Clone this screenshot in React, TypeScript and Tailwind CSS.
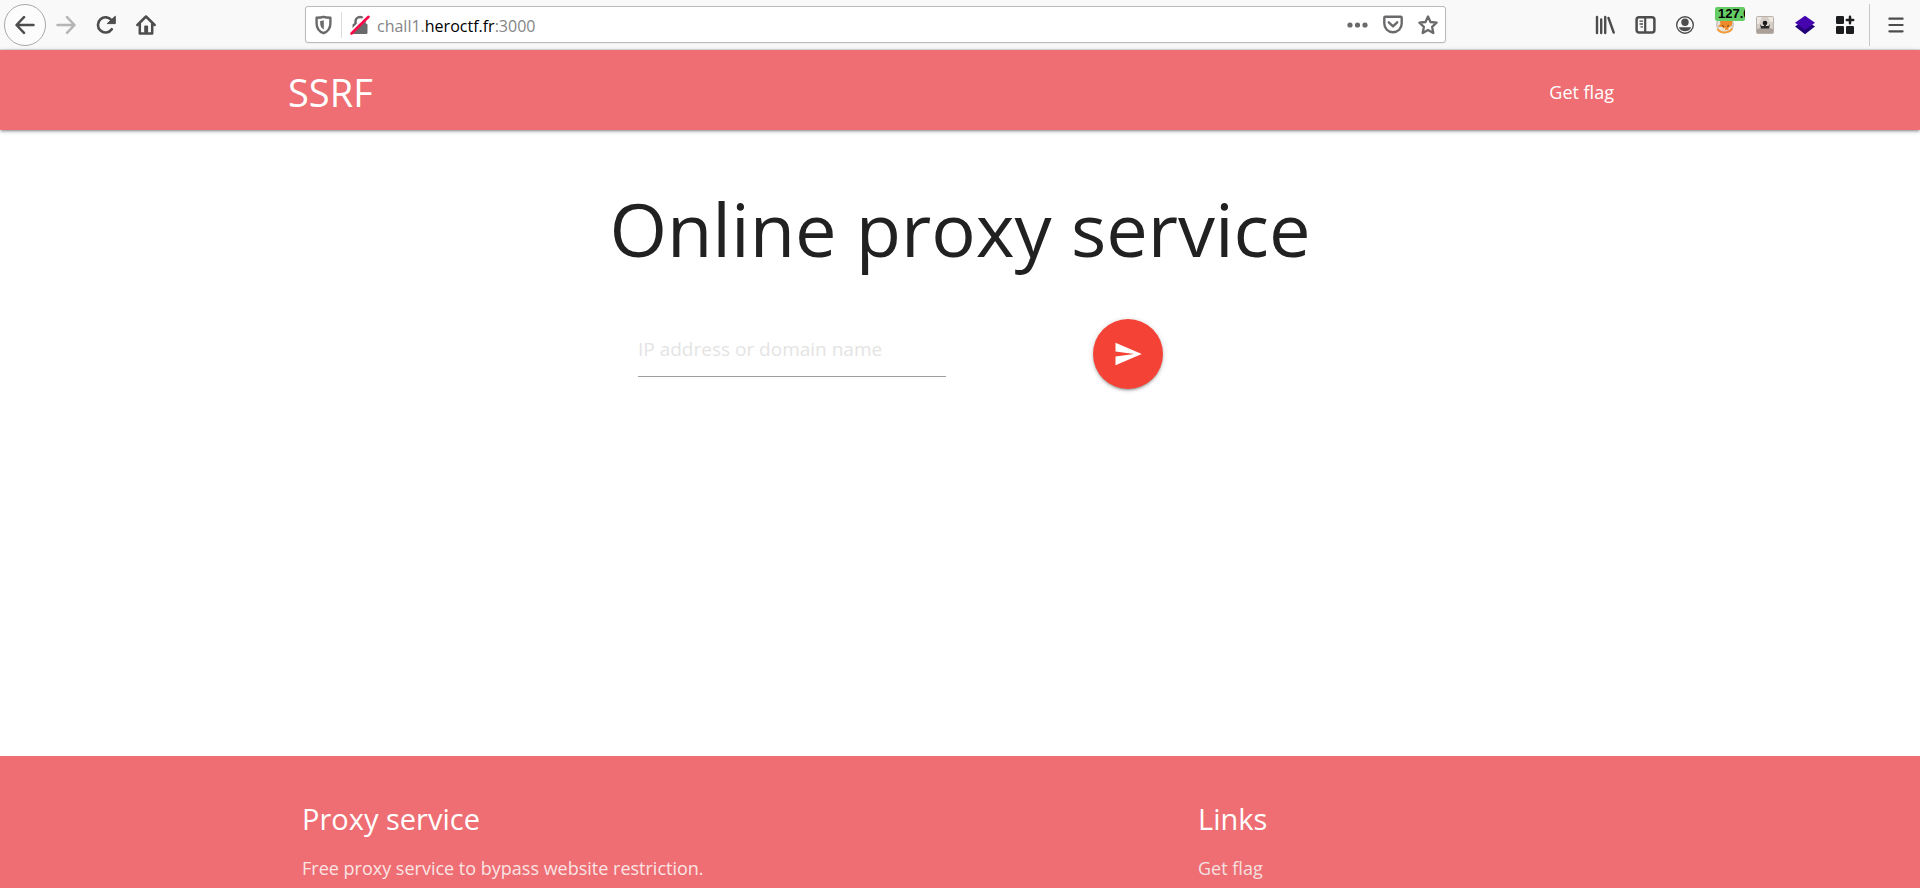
import type { ReactNode } from "react";

function ToolButton({ label, children }: { label: string; children: ReactNode }) {
  return (
    <button type="button" aria-label={label} className="relative flex h-10 w-10 shrink-0 items-center justify-center">
      {children}
    </button>
  );
}

function BrowserBar() {
  return (
    <header className="flex h-[50px] items-center border-b border-[#dcdcdc] bg-[#f9f9fa] px-1 text-[#4d4d4d]">
      <button
        type="button"
        aria-label="Back"
        className="flex h-[42px] w-[42px] shrink-0 items-center justify-center rounded-full border border-[#a9a9a9] bg-[#fcfcfc]"
      >
        <svg width="20" height="20" viewBox="0 0 20 20" fill="none" stroke="currentColor" strokeWidth="2.5" strokeLinecap="round" strokeLinejoin="round">
          <path d="M18.5 10H1.8M9 2.2L1.5 10L9 17.8" />
        </svg>
      </button>
      <ToolButton label="Forward">
        <svg width="20" height="20" viewBox="0 0 20 20" fill="none" stroke="#b5b5b5" strokeWidth="2.5" strokeLinecap="round" strokeLinejoin="round">
          <path d="M1.5 10H18.2M11 2.2L18.5 10L11 17.8" />
        </svg>
      </ToolButton>
      <ToolButton label="Reload">
        <svg width="20" height="20" viewBox="0 0 20 20" fill="none">
          <path d="M15.8 14.2A7.6 7.6 0 1 1 15.8 5.6" stroke="currentColor" strokeWidth="2.6" strokeLinecap="round" />
          <path d="M19.3 1.2V8.6H11.2Z" fill="currentColor" stroke="currentColor" strokeLinejoin="round" />
        </svg>
      </ToolButton>
      <ToolButton label="Home">
        <svg width="20" height="20" viewBox="0 0 20 20" fill="none" stroke="currentColor" strokeWidth="2.5" strokeLinecap="round" strokeLinejoin="round">
          <path d="M1.4 10L10 1.5L18.6 10" />
          <path d="M3.8 9V18.5H16.2V9" />
          <path d="M9.3 17V11.5H11V17Z" strokeWidth="2.2" />
        </svg>
      </ToolButton>

      <div className="mx-[139px] flex h-[37px] min-w-0 flex-1 items-center rounded-[3px] border border-[#b9b9b9] bg-white pl-[9px] text-[#6a6a6c] shadow-xs">
        <svg className="shrink-0" width="17" height="20" viewBox="0 0 17 20">
          <path d="M8.5 1.8C10.8 2.6 13 2.7 15.4 2.8V8.5C15.4 13.4 12.6 16.6 8.5 18.2C4.4 16.6 1.6 13.4 1.6 8.5V2.8C4 2.7 6.2 2.6 8.5 1.8Z" fill="none" stroke="currentColor" strokeWidth="2.4" strokeLinejoin="round" />
          <path d="M8.8 5.3V14.5C6.3 13 5.2 11 5.2 8.5V6C6.5 5.9 7.700 5.700 8.800 5.300Z" fill="currentColor" />
        </svg>
        <span className="ml-[9px] h-[26px] w-px bg-[#dcdcdc]" />
        <svg className="ml-[8px] shrink-0" width="20" height="20" viewBox="0 0 20 20" fill="none">
          <path d="M5.500 9V6.500A4.500 4.500 0 0 1 14.500 6.500V9" stroke="currentColor" strokeWidth="2.500" />
          <rect x="2.500" y="8.500" width="15" height="10.500" rx="1.500" fill="currentColor" />
          <path d="M0.500 16.500L16.500 0.500" stroke="#ffffff" strokeWidth="2" />
          <path d="M1.500 18.500L18.500 1.800" stroke="#fb0a49" strokeWidth="2.600" strokeLinecap="round" />
        </svg>
        <div className="ml-[7px] flex-1 truncate pt-[2px] text-[16px] leading-6 text-[#858585]">
          chall1.<span className="text-black">heroctf.fr</span>:3000
        </div>
        <button type="button" aria-label="Page actions" className="flex h-9 w-[35px] items-center justify-center">
          <svg width="21" height="6" viewBox="0 0 21 6" fill="currentColor">
            <circle cx="3" cy="3" r="2.600" />
            <circle cx="10.500" cy="3" r="2.600" />
            <circle cx="18" cy="3" r="2.600" />
          </svg>
        </button>
        <button type="button" aria-label="Save to Pocket" className="flex h-9 w-[35px] items-center justify-center">
          <svg width="20" height="19" viewBox="0 0 20 19" fill="none" stroke="currentColor" strokeWidth="2.400" strokeLinecap="round" strokeLinejoin="round">
            <path d="M2.300 1.800H17.700C18.300 1.800 18.700 2.200 18.700 2.800V8.500C18.700 13.500 15 17.200 10 17.200C5 17.200 1.300 13.500 1.300 8.500V2.800C1.300 2.200 1.700 1.800 2.300 1.800Z" />
            <path d="M5.800 7.300L10 11.300L14.200 7.300" />
          </svg>
        </button>
        <button type="button" aria-label="Bookmark this page" className="flex h-9 w-[35px] items-center justify-center">
          <svg width="20" height="20" viewBox="0 0 20 20" fill="none" stroke="currentColor" strokeWidth="2.300" strokeLinejoin="round">
            <path d="M10 1.500L12.500 7L18.600 7.700L14.100 11.800L15.300 18L10 14.900L4.700 18L5.900 11.800L1.400 7.700L7.500 7Z" />
          </svg>
        </button>
      </div>

      <ToolButton label="Library">
        <svg width="20" height="20" viewBox="0 0 20 20" fill="none" stroke="currentColor" strokeWidth="2.400" strokeLinecap="round">
          <path d="M2 2V18M6.200 4.500V18M10.200 2V18M13.500 3L18.700 17.500" />
        </svg>
      </ToolButton>
      <ToolButton label="Sidebars">
        <svg width="21" height="20" viewBox="0 0 21 20" fill="none" stroke="currentColor">
          <rect x="1.600" y="2.200" width="17.800" height="15.400" rx="2.500" strokeWidth="2.500" />
          <path d="M10.200 2.500V17.500" strokeWidth="2.200" />
          <path d="M4.500 6.200H8M4.500 9H8M5.500 11.800H8" strokeWidth="1.300" />
        </svg>
      </ToolButton>
      <ToolButton label="Account">
        <svg width="20" height="20" viewBox="0 0 20 20">
          <circle cx="10" cy="10" r="8.300" fill="none" stroke="currentColor" strokeWidth="1.400" />
          <circle cx="10" cy="7.300" r="3.700" fill="currentColor" />
          <path d="M3.800 12.300H16.200C15.200 14.800 12.900 16.200 10 16.200C7.100 16.200 4.800 14.800 3.800 12.300Z" fill="currentColor" />
        </svg>
      </ToolButton>
      <ToolButton label="FoxyProxy">
        <svg width="20" height="20" viewBox="0 0 20 20">
          <circle cx="10" cy="9.500" r="8.300" fill="#e8e2dc" stroke="#b9aca2" />
          <path d="M2.500 14C5 18.300 13.500 19 17.300 13.500" fill="none" stroke="#f39a38" strokeWidth="2" />
          <path d="M4.500 5L17.500 5L17 10L14 14.500L9 15.500L7.500 12L2.500 11.500L5.500 9Z" fill="#ee8a2c" />
          <path d="M8 13L10.500 13.500L9.500 16ZM13 13.500L16 11L14.500 15Z" fill="#fff4e8" />
          <path d="M7 10.500L9 11.500M12 11.500L14 10.500" stroke="#6c3c17" />
        </svg>
        <span className="absolute top-[2px] left-[10px] w-[30px] overflow-hidden rounded-[2px] bg-[#66cc66] pl-[3px] text-left font-['Liberation_Sans',sans-serif] text-[13px] leading-[14px] font-bold text-black">
          127.0
        </span>
      </ToolButton>
      <ToolButton label="User agent">
        <svg width="18" height="18" viewBox="0 0 18 18">
          <rect x="0.500" y="0.500" width="17" height="17" rx="1" fill="#d5cdc6" stroke="#b8b0aa" />
          <path d="M1 1H6L3 8H1ZM12 1H17V6H14Z" fill="#eee8e2" />
          <path d="M1 13L7 11.500H12L17 13V17H1Z" fill="#aaa098" />
          <circle cx="9" cy="7" r="2.300" fill="#181818" />
          <path d="M4 8L5 12.500H13L14 8L12.500 10H10V8H8V10H5.500Z" fill="#292929" />
        </svg>
      </ToolButton>
      <ToolButton label="Layers">
        <svg width="20" height="20" viewBox="0 0 20 20">
          <path d="M0 11.500L3 9.500H17L20 11.500L10 19.300Z" fill="#240079" />
          <path d="M10 0.700L20 7.700L10 14.700L0 7.700Z" fill="#4604ae" />
        </svg>
      </ToolButton>
      <ToolButton label="Extensions">
        <svg width="20" height="20" viewBox="0 0 20 20" fill="#1c1d1f">
          <rect x="1" y="1" width="8" height="8" rx="1.300" />
          <rect x="1" y="11" width="8" height="8" rx="1.300" />
          <rect x="11" y="11" width="8" height="8" rx="1.300" />
          <path d="M15 1.800V8.200M11.800 5H18.200" stroke="#1c1d1f" strokeWidth="2.500" strokeLinecap="round" />
        </svg>
      </ToolButton>
      <span className="mr-[6px] ml-1 h-[42px] w-px bg-[#c8c8c8]" />
      <ToolButton label="Menu">
        <svg width="16" height="18" viewBox="0 0 16 18" fill="none" stroke="currentColor" strokeWidth="2.200" strokeLinecap="round">
          <path d="M1.400 2.700H14.600M1.400 9H14.600M1.400 15.300H14.600" />
        </svg>
      </ToolButton>
    </header>
  );
}

export default function App() {
  return (
    <div className="flex min-h-screen flex-col bg-white font-['Open_Sans','Noto_Sans',sans-serif] text-[#212121]">
      <BrowserBar />
      <nav className="relative bg-[#ee6e73] text-white shadow-[0_2px_2px_0_rgba(0,0,0,0.14),0_3px_1px_-2px_rgba(0,0,0,0.12),0_1px_5px_0_rgba(0,0,0,0.2)]">
        <div className="mx-auto flex h-20 w-[70%] items-center justify-between pt-1">
          <a href="#home" className="text-[38px] leading-[76px]">SSRF</a>
          <a href="#flag" className="px-[18px] text-[18px] leading-[76px]">Get flag</a>
        </div>
      </nav>

      <main className="mx-auto w-[70%] flex-1">
        <h1 className="mt-[55px] text-center text-[74px] leading-[88px]">Online proxy service</h1>
        <form className="mt-[46px] grid grid-cols-4 items-start" onSubmit={(event) => event.preventDefault()}>
          <div className="col-start-2 px-[14px]">
            <input
              type="text"
              aria-label="IP address or domain name"
              placeholder="IP address or domain name"
              className="h-[58px] w-full border-b border-[#9e9e9e] bg-transparent pt-[3px] text-[19px] outline-none placeholder:text-[#e4e4e4]"
            />
          </div>
          <div className="flex justify-center">
            <button
              type="submit"
              aria-label="Send"
              className="flex h-[70px] w-[70px] items-center justify-center rounded-full bg-[#f44336] text-white shadow-[0_2px_2px_0_rgba(0,0,0,0.14),0_3px_1px_-2px_rgba(0,0,0,0.12),0_1px_5px_0_rgba(0,0,0,0.2)]"
            >
              <svg width="30" height="30" viewBox="0 0 24 24" fill="currentColor">
                <path d="M2.010 21L23 12L2.010 3L2 10L17 12L2 14Z" />
              </svg>
            </button>
          </div>
        </form>
      </main>

      <footer className="bg-[#ee6e73] text-white">
        <div className="mx-auto grid w-[70%] grid-cols-12 pt-[45px] pb-[6px]">
          <section className="col-span-6 px-[14px]">
            <h5 className="text-[29px] leading-[36px]">Proxy service</h5>
            <p className="mt-[18px] text-[18px] leading-[27px] text-[#fae4e4]">Free proxy service to bypass website restriction.</p>
          </section>
          <section className="col-span-4 col-start-9 px-[14px]">
            <h5 className="text-[29px] leading-[36px]">Links</h5>
            <ul className="mt-[18px] text-[18px] leading-[27px]">
              <li>
                <a href="#flag" className="text-[#f5e0e0]">Get flag</a>
              </li>
            </ul>
          </section>
        </div>
      </footer>
    </div>
  );
}
